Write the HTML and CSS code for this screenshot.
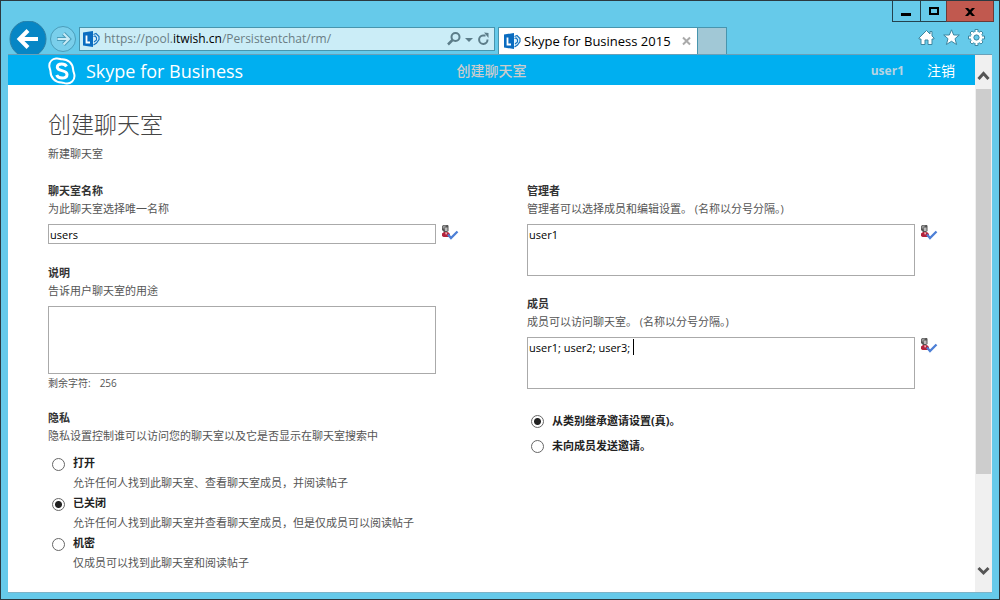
FILE: index.html
```html
<!DOCTYPE html>
<html lang="zh-CN">
<head>
<meta charset="utf-8">
<title>Skype for Business 2015</title>
<link rel="stylesheet" href="styles.css">
</head>
<body>
<svg class="defs" aria-hidden="true">
  <symbol id="lync" viewBox="0 0 17 16">
    <path d="M10.500 3.500 13 2.500 16 5.500 16 8.500 13.500 12 10.500 14" fill="#d8effa" stroke="#1673c0" stroke-width="1.200"/>
    <path d="M10.500 5.500 12 5l1.500 1.500v2.500L11 11" fill="none" stroke="#1673c0" stroke-width="1.100"/>
    <path d="M0 1.500 10 0v16L0 14.500z" fill="#0a6cc0"/>
    <path d="M3.500 4.500v7H7" fill="none" stroke="#fff" stroke-width="1.800"/>
  </symbol>
  <symbol id="check-name" viewBox="0 0 18 16">
    <path d="M1 9.500 3 8h4l2 2v2.500L7.500 13h-5L1 12z" fill="#b3233c"/>
    <path d="M4 8.500 5 11l1.500-2.500z" fill="#f3c3c6"/>
    <path d="M1 2 2.500 1H7l.500 1v5L6 8H3L1 6z" fill="#555"/>
    <path d="M3.500 3.500H6.500V7H4z" fill="#bbb"/>
    <path d="M1.500 2.500 3 1.500h2.500L2 5z" fill="#999"/>
    <path d="M7 10.500 10 14 16.500 7.500" fill="none" stroke="#4d7fd6" stroke-width="2.300"/>
  </symbol>
</svg>
<div class="window">
  <div class="titlebar">
    <button class="caption" aria-label="最小化"><svg width="27" height="20"><path d="M8 12h10v3H8z"/></svg></button>
    <button class="caption" aria-label="最大化"><svg width="25" height="20"><path d="M9 7h8v6H9z" fill="none" stroke="#000" stroke-width="2"/></svg></button>
    <button class="caption caption-close" aria-label="关闭"><svg width="46" height="20"><path d="M18 7h3l2 2 2-2h3l-3.500 4 3.500 4h-3l-2-2-2 2h-3l3.500-4z"/></svg></button>
  </div>
  <div class="toolbar">
    <button class="plain back" aria-label="后退"><svg width="38" height="34"><circle cx="19" cy="18" r="18" fill="#0686c5" stroke="#2d80a6"/><path d="M11 18h18M19 9.500 10.500 18 19 26.500" fill="none" stroke="#fff" stroke-width="4"/></svg></button>
    <button class="plain forward" aria-label="前进"><svg width="27" height="34"><circle cx="13" cy="18" r="12.500" fill="#7acfeb" stroke="#4b9dba"/><path d="M7 18h12M13.500 12.500 19 18l-5.500 5.500" fill="none" stroke="#4b9dba" stroke-width="4"/><path d="M7.500 18h11M13.500 12.500 19 18l-5.500 5.500" fill="none" stroke="#c9ebf6" stroke-width="2"/></svg></button>
    <div class="address">
      <svg width="17" height="16"><use href="#lync"/></svg>
      <span class="url">https://pool.<b>itwish.cn</b>/Persistentchat/rm/</span>
      <button class="plain" aria-label="搜索"><svg width="14" height="16"><circle cx="8.500" cy="6" r="4" fill="none" stroke="#5c7d89" stroke-width="2"/><path d="M5.500 9 1 13.500" stroke="#5c7d89" stroke-width="2.500"/></svg></button>
      <button class="plain" aria-label="展开"><svg width="8" height="16"><path d="M0 7h8L4 11z" fill="#5c7d89"/></svg></button>
      <button class="plain" aria-label="刷新"><svg width="13" height="16"><path d="M8.500 4.500H6a4.200 4.200 0 1 0 4.500 4" fill="none" stroke="#5c7d89" stroke-width="2"/><path d="M7 1.500 11.500 2V7z" fill="#5c7d89"/></svg></button>
    </div>
    <div class="tab">
      <svg width="17" height="16"><use href="#lync"/></svg>
      <span class="tab-title">Skype for Business 2015</span>
      <button class="plain" aria-label="关闭标签页"><svg width="9" height="16"><path d="M1 4.500l7 7M8 4.500l-7 7" stroke="#aaa" stroke-width="2"/></svg></button>
    </div>
    <button class="new-tab" aria-label="新建标签页"></button>
    <div class="tools">
      <button class="plain" aria-label="主页"><svg width="17" height="17"><path d="M8.500 1.500 1 9v1h2v5.500h4V11h3v4.500h4V10h2V9l-2-2V2.500h-2V5z" fill="#fff" stroke="#3d86a0"/></svg></button>
      <button class="plain" aria-label="收藏夹"><svg width="17" height="17"><path d="M8.500.8 10.700 6h5.600l-4.300 3.700 1.600 5.800-5.100-3.200-5.100 3.200 1.600-5.800L.7 6h5.600z" fill="#fff" stroke="#3d86a0"/></svg></button>
      <button class="plain" aria-label="工具"><svg width="17" height="17"><path d="M7 3V.5h3V3M7 14v2.500h3V14M3 7H.5v3H3M14 7h2.500v3H14M3.500 6 2 4l2-2 2 1.500M11 3.500 13 2l2 2-1.500 2M13.500 11 15 13l-2 2-2-1.500M6 13.500 4 15l-2-2 1.500-2" fill="#fff" stroke="#3d86a0"/><circle cx="8.500" cy="8.500" r="4.200" fill="none" stroke="#fff" stroke-width="3"/><circle cx="8.500" cy="8.500" r="2.600" fill="#66caea" stroke="#3d86a0"/></svg></button>
    </div>
  </div>
  <div class="viewport">
    <div class="page">
      <header class="appbar">
        <div class="brand">
          <svg width="28" height="28" viewBox="0 0 28 28" fill="none" stroke="#fff"><path d="M8 1.500C11 1.200 12 2 13.500 2.300 20 2 25 6.500 25.200 13c0 2 1.300 3 1.300 6 0 4.500-3.500 7.800-8 7.500-2.500 0-3-1-5-1.100C7 25.500 2.500 20.500 2.500 14.500 2.300 12 1.200 11 1.300 8.500 1.500 4.500 4.500 1.800 8 1.500z" stroke-width="2"/><path d="M18.500 9.500C17.500 7.500 15.500 7 13.700 7c-2.700 0-4.400 1.300-4.400 3.300 0 4.500 9.700 2.200 9.700 7.200 0 2.300-2.200 3.500-4.900 3.500-2.500 0-4.600-.9-5.400-3" stroke-width="3"/></svg>
          <span>Skype for Business</span>
        </div>
        <div class="current">创建聊天室</div>
        <div class="account"><b>user1</b><a href="#">注销</a></div>
      </header>
      <main class="content">
        <h1>创建聊天室</h1>
        <p class="subtitle">新建聊天室</p>
        <form class="columns">
          <div class="column">
            <div class="field">
              <label for="name">聊天室名称</label>
              <p>为此聊天室选择唯一名称</p>
              <div class="entry">
                <input id="name" class="box" type="text" value="users">
                <button type="button" class="plain" aria-label="检查名称"><svg width="18" height="16"><use href="#check-name"/></svg></button>
              </div>
            </div>
            <div class="field">
              <label for="desc">说明</label>
              <p>告诉用户聊天室的用途</p>
              <div class="entry entry-plain"><textarea id="desc" class="box tall"></textarea></div>
              <div class="remaining"><span>剩余字符:</span><span>256</span></div>
            </div>
            <fieldset class="field privacy">
              <legend>隐私</legend>
              <p>隐私设置控制谁可以访问您的聊天室以及它是否显示在聊天室搜索中</p>
              <div class="options">
                <div class="option"><input type="radio" name="privacy" id="open"><label for="open">打开</label><p>允许任何人找到此聊天室、查看聊天室成员，并阅读帖子</p></div>
                <div class="option"><input type="radio" name="privacy" id="closed" checked><label for="closed">已关闭</label><p>允许任何人找到此聊天室并查看聊天室成员，但是仅成员可以阅读帖子</p></div>
                <div class="option"><input type="radio" name="privacy" id="secret"><label for="secret">机密</label><p>仅成员可以找到此聊天室和阅读帖子</p></div>
              </div>
            </fieldset>
          </div>
          <div class="column">
            <div class="field">
              <label for="managers">管理者</label>
              <p>管理者可以选择成员和编辑设置。 (名称以分号分隔。)</p>
              <div class="entry">
                <textarea id="managers" class="box">user1</textarea>
                <button type="button" class="plain" aria-label="检查名称"><svg width="18" height="16"><use href="#check-name"/></svg></button>
              </div>
            </div>
            <div class="field members">
              <label for="members">成员</label>
              <p>成员可以访问聊天室。 (名称以分号分隔。)</p>
              <div class="entry">
                <textarea id="members" class="box">user1; user2; user3; </textarea>
                <span class="caret"></span>
                <button type="button" class="plain" aria-label="检查名称"><svg width="18" height="16"><use href="#check-name"/></svg></button>
              </div>
            </div>
            <div class="invites">
              <div class="invite"><input type="radio" name="invite" id="inherit" checked><label for="inherit">从类别继承邀请设置(真)。</label></div>
              <div class="invite"><input type="radio" name="invite" id="none"><label for="none">未向成员发送邀请。</label></div>
            </div>
          </div>
        </form>
      </main>
    </div>
    <div class="scrollbar">
      <svg width="17" height="34"><path d="M3.500 24 8.500 18.500 13.500 24" fill="none" stroke="#555" stroke-width="3"/></svg>
      <div class="track"><div class="thumb"></div></div>
      <svg width="17" height="34"><path d="M3.500 10 8.500 15 13.500 10" fill="none" stroke="#555" stroke-width="3"/></svg>
    </div>
  </div>
</div>
</body>
</html>
```
FILE: styles.css
```css
* { box-sizing: border-box; }
body { margin: 0; font: 11px/18px "Open Sans", "Noto Sans CJK SC", sans-serif; color: #555; }
h1, p, fieldset, legend { margin: 0; padding: 0; border: 0; font-weight: normal; }
svg { display: block; }
.defs { position: absolute; width: 0; height: 0; }
.plain { flex: none; border: 0; padding: 0; background: none; }

.window { display: flex; flex-direction: column; min-height: 100vh; background: #66caea; border: 1px solid #2b3940; border-width: 1px 1px 2px; }
.titlebar { display: flex; justify-content: flex-end; height: 20px; padding-right: 5px; }
.caption { padding: 0; border: 1px solid #24424e; border-top: 0; background: none; margin-left: -1px; height: 21px; }
.caption-close { background: #c1594f; border-color: #6b3a38; }

.toolbar { display: flex; height: 33px; padding-left: 8px; }
.back { height: 33px; overflow: hidden; }
.forward { margin: 0 2px 0 3px; }
.address { display: flex; align-items: center; flex: none; width: 416px; height: 24px; margin-top: 6px; padding: 0 4px 0 3px; gap: 4px; border: 1px solid #4795ae; background: #cbedf7; }
.url { flex: 1; font: 12px/20px "Open Sans", sans-serif; color: #6a7d84; white-space: nowrap; }
.url b { font-weight: normal; color: #000; }
.tab { display: flex; align-items: center; flex: none; width: 200px; height: 27px; margin: 6px 0 0 3px; padding: 0 6px 0 5px; gap: 3px; border: 1px solid #4795ae; border-bottom: 0; background: #fff; }
.tab-title { flex: 1; font-size: 13px; color: #000; white-space: nowrap; }
.new-tab { width: 29px; height: 27px; margin-top: 6px; padding: 0; border: 1px solid #4795ae; border-width: 1px 1px 0 0; background: #a1c8d6; }
.tools { display: flex; gap: 8px; margin-left: auto; padding: 8px 14px 0 0; height: 25px; }

.viewport { display: flex; flex: 1; margin: 0 7px 6px; border-top: 1px solid #6aa0b8; border-bottom: 1px solid #7eb4c8; background: #fff; }
.page { flex: 1; }
.appbar { display: grid; grid-template-columns: 1fr auto 1fr; align-items: center; height: 30px; padding: 2px 20px 0 40px; background: #00aff0; color: #fff; }
.brand { display: flex; align-items: center; gap: 10px; font-size: 18px; }
.current { margin-right: 20px; font-size: 14px; font-weight: 500; color: #ccc; }
.account { display: flex; justify-content: flex-end; gap: 23px; font-size: 14px; }
.account b { font-size: 12px; font-weight: bold; color: #b5d3e2; }
.account a { color: #fff; text-decoration: none; }

.content { padding: 24px 37px 19px 40px; }
h1 { font-size: 23px; line-height: 30px; font-weight: 300; color: #444; }
.subtitle { margin: 6px 0 19px; }
.columns { display: grid; grid-template-columns: 1fr 1fr; gap: 68px; }
.field + .field { margin-top: 20px; }
.field > label, legend { display: block; font-weight: bold; color: #333; }
.entry { display: flex; align-items: flex-start; gap: 5px; margin-top: 6px; position: relative; }
.entry-plain { padding-right: 23px; }
.box { flex: 1; min-width: 0; height: 52px; margin: 0; padding: 2px 1px; border: 1px solid #aaa; border-radius: 0; background: #fff; color: #000; font: 11px/16px "Open Sans", "Noto Sans CJK SC", sans-serif; resize: none; outline: 0; overflow: hidden; }
input.box { height: 20px; padding: 1px; }
.box.tall { height: 68px; }
.caret { position: absolute; left: 106px; top: 2px; width: 1px; height: 16px; background: #000; }
.remaining { display: flex; gap: 9px; font-size: 10px; }
.field + .privacy { margin-top: 17px; }
.field + .members { margin-top: 19px; }
.options { margin-top: 8px; }
.option { display: grid; grid-template-columns: 13px 1fr; column-gap: 8px; padding-left: 4px; line-height: 20px; }
.option p { grid-column: 2; }
.option label, .invite label { font-weight: bold; color: #222; }
input[type="radio"] { appearance: none; width: 13px; height: 13px; margin: 5px 0 0; border: 1px solid #666; border-radius: 50%; background: #fff; }
input[type="radio"]:checked { background: radial-gradient(circle, #222 3px, #fff 4px); }
.invites { margin-top: 19px; }
.invite { display: grid; grid-template-columns: 13px 1fr; column-gap: 8px; padding-left: 4px; line-height: 25px; }
.invite input[type="radio"] { margin-top: 7px; }

.scrollbar { display: flex; flex-direction: column; width: 17px; background: #f0f0f0; }
.track { flex: 1; padding: 0 1px; }
.thumb { height: 82%; background: #cdcdcd; }
```
